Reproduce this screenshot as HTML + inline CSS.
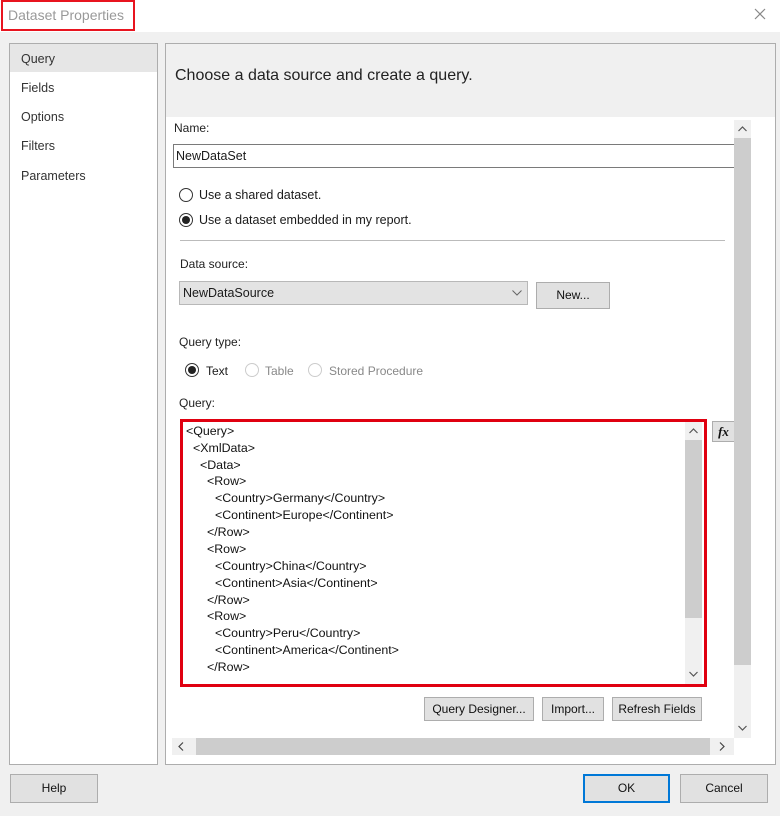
<!DOCTYPE html>
<html><head><meta charset="utf-8"><style>
*{box-sizing:border-box;margin:0;padding:0}
body{width:780px;height:816px;background:#f0f0f0;font-family:"Liberation Sans",sans-serif;font-size:12px;color:#1a1a1a;position:relative;overflow:hidden}
.a{position:absolute}
.btn{position:absolute;background:#e1e1e1;border:1px solid #adadad;text-align:center;font-size:12px;color:#111}
.radio{position:absolute;width:14px;height:14px;border:1px solid #333;border-radius:50%;background:#fff}
.radio.on::after{content:"";position:absolute;left:2px;top:2px;width:8px;height:8px;border-radius:50%;background:#222}
.radio.dis{border-color:#ccc}
.q{position:absolute;font-size:12.4px;white-space:pre;color:#111}
.chev{position:absolute;font-size:11px;color:#555}
</style></head><body>
<div class="a" style="left:0;top:0;width:780px;height:32px;background:#fff"></div>
<div class="a" style="left:1px;top:0;width:134px;height:31px;border:2px solid #e8141f"></div>
<div class="a" style="left:8px;top:7px;font-size:14px;color:#999">Dataset Properties</div>
<svg class="a" style="left:754px;top:8px" width="12" height="12"><path d="M1 1L11 11M11 1L1 11" stroke="#888" stroke-width="1.2"/></svg>

<div class="a" style="left:9px;top:43px;width:149px;height:722px;background:#fff;border:1px solid #adadad"></div>
<div class="a" style="left:10px;top:44px;width:147px;height:28px;background:#e6e6e6"></div>
<div class="a" style="left:21px;top:52px;font-size:12.5px;color:#333">Query</div>
<div class="a" style="left:21px;top:81px;font-size:12.5px;color:#333">Fields</div>
<div class="a" style="left:21px;top:110px;font-size:12.5px;color:#333">Options</div>
<div class="a" style="left:21px;top:139px;font-size:12.5px;color:#333">Filters</div>
<div class="a" style="left:21px;top:169px;font-size:12.5px;color:#333">Parameters</div>

<div class="a" style="left:165px;top:43px;width:611px;height:722px;background:#fff;border:1px solid #adadad"></div>
<div class="a" style="left:166px;top:44px;width:609px;height:73px;background:#f0f0f0"></div>
<div class="a" style="left:175px;top:67px;font-size:16px;color:#222">Choose a data source and create a query.</div>

<div class="a" style="left:174px;top:121px;color:#222">Name:</div>
<div class="a" style="left:173px;top:144px;width:561px;height:24px;border:1px solid #7a7a7a;border-right:none;background:#fff"></div>
<div class="a" style="left:176px;top:149px;font-size:12.5px">NewDataSet</div>

<div class="radio" style="left:179px;top:188px"></div>
<div class="a" style="left:199px;top:188px;font-size:12.5px">Use a shared dataset.</div>
<div class="radio on" style="left:179px;top:213px"></div>
<div class="a" style="left:199px;top:213px;font-size:12.5px">Use a dataset embedded in my report.</div>
<div class="a" style="left:180px;top:240px;width:545px;height:1px;background:#bbb"></div>

<div class="a" style="left:180px;top:257px;color:#222">Data source:</div>
<div class="a" style="left:179px;top:281px;width:349px;height:24px;background:#e3e3e3;border:1px solid #b8b8b8"></div>
<div class="a" style="left:183px;top:286px;font-size:12.5px">NewDataSource</div>
<svg class="a" style="left:512px;top:290px" width="10" height="6"><path d="M0.5 0.5L5 5L9.5 0.5" stroke="#666" fill="none"/></svg>
<div class="btn" style="left:536px;top:282px;width:74px;height:27px;line-height:25px">New...</div>

<div class="a" style="left:179px;top:335px;color:#222">Query type:</div>
<div class="radio on" style="left:185px;top:363px"></div>
<div class="a" style="left:206px;top:364px">Text</div>
<div class="radio dis" style="left:245px;top:363px"></div>
<div class="a" style="left:265px;top:364px;color:#888">Table</div>
<div class="radio dis" style="left:308px;top:363px"></div>
<div class="a" style="left:329px;top:364px;color:#888">Stored Procedure</div>

<div class="a" style="left:179px;top:396px;color:#222">Query:</div>
<div class="a" style="left:180px;top:419px;width:527px;height:268px;border:3px solid #e00010;background:#fff"></div>
<div class="a" style="left:685px;top:422px;width:17px;height:262px;background:#f0f0f0"></div>
<div class="a" style="left:685px;top:440px;width:17px;height:178px;background:#cdcdcd"></div>
<svg class="a" style="left:689px;top:428px" width="9" height="6"><path d="M0.5 5L4.5 1L8.5 5" stroke="#555" fill="none" stroke-width="1.2"/></svg>
<svg class="a" style="left:689px;top:671px" width="9" height="6"><path d="M0.5 1L4.5 5L8.5 1" stroke="#555" fill="none" stroke-width="1.2"/></svg>
<div class="btn" style="left:712px;top:421px;width:22px;height:21px;font-family:'Liberation Serif',serif;font-style:italic;font-weight:bold;font-size:13px;line-height:19px;border-right:none">fx</div>

<div class="q" style="left:186px;top:424px">&lt;Query&gt;</div>
<div class="q" style="left:193px;top:441px">&lt;XmlData&gt;</div>
<div class="q" style="left:200px;top:458px">&lt;Data&gt;</div>
<div class="q" style="left:207px;top:474px">&lt;Row&gt;</div>
<div class="q" style="left:215px;top:491px">&lt;Country&gt;Germany&lt;/Country&gt;</div>
<div class="q" style="left:215px;top:508px">&lt;Continent&gt;Europe&lt;/Continent&gt;</div>
<div class="q" style="left:207px;top:525px">&lt;/Row&gt;</div>
<div class="q" style="left:207px;top:542px">&lt;Row&gt;</div>
<div class="q" style="left:215px;top:559px">&lt;Country&gt;China&lt;/Country&gt;</div>
<div class="q" style="left:215px;top:576px">&lt;Continent&gt;Asia&lt;/Continent&gt;</div>
<div class="q" style="left:207px;top:593px">&lt;/Row&gt;</div>
<div class="q" style="left:207px;top:609px">&lt;Row&gt;</div>
<div class="q" style="left:215px;top:626px">&lt;Country&gt;Peru&lt;/Country&gt;</div>
<div class="q" style="left:215px;top:643px">&lt;Continent&gt;America&lt;/Continent&gt;</div>
<div class="q" style="left:207px;top:660px">&lt;/Row&gt;</div>

<div class="btn" style="left:424px;top:697px;width:110px;height:24px;line-height:22px">Query Designer...</div>
<div class="btn" style="left:542px;top:697px;width:62px;height:24px;line-height:22px">Import...</div>
<div class="btn" style="left:612px;top:697px;width:90px;height:24px;line-height:22px">Refresh Fields</div>

<div class="a" style="left:734px;top:120px;width:17px;height:618px;background:#f0f0f0"></div>
<div class="a" style="left:734px;top:138px;width:17px;height:527px;background:#cdcdcd"></div>
<svg class="a" style="left:738px;top:126px" width="9" height="6"><path d="M0.5 5L4.5 1L8.5 5" stroke="#555" fill="none" stroke-width="1.2"/></svg>
<svg class="a" style="left:738px;top:725px" width="9" height="6"><path d="M0.5 1L4.5 5L8.5 1" stroke="#555" fill="none" stroke-width="1.2"/></svg>
<div class="a" style="left:172px;top:738px;width:562px;height:17px;background:#f0f0f0"></div>
<div class="a" style="left:196px;top:738px;width:514px;height:17px;background:#cdcdcd"></div>
<svg class="a" style="left:178px;top:742px" width="6" height="9"><path d="M5 0.5L1 4.5L5 8.5" stroke="#444" fill="none" stroke-width="1.2"/></svg>
<svg class="a" style="left:719px;top:742px" width="6" height="9"><path d="M1 0.5L5 4.5L1 8.5" stroke="#444" fill="none" stroke-width="1.2"/></svg>

<div class="btn" style="left:10px;top:774px;width:88px;height:29px;line-height:27px">Help</div>
<div class="btn" style="left:583px;top:774px;width:87px;height:29px;line-height:25px;border:2px solid #0078d7">OK</div>
<div class="btn" style="left:680px;top:774px;width:88px;height:29px;line-height:27px">Cancel</div>
</body></html>
